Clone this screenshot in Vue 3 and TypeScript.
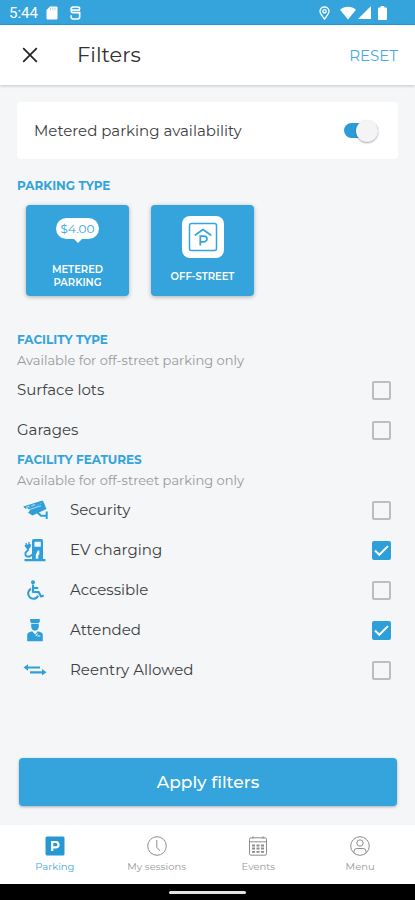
<script setup lang="ts">
import { reactive, ref } from 'vue'

type FeatureIcon = 'camera' | 'charger' | 'wheelchair' | 'attendant' | 'arrows'
type TabIcon = 'parking' | 'clock' | 'calendar' | 'person'

interface Option {
  id: string
  label: string
  checked: boolean
  icon?: FeatureIcon
}

const metered = ref(true)
const parkingTypes = reactive({ metered: true, offStreet: true })

const facilityTypes = reactive<Option[]>([
  { id: 'surface', label: 'Surface lots', checked: false },
  { id: 'garages', label: 'Garages', checked: false },
])

const features = reactive<Option[]>([
  { id: 'security', label: 'Security', checked: false, icon: 'camera' },
  { id: 'ev', label: 'EV charging', checked: true, icon: 'charger' },
  { id: 'accessible', label: 'Accessible', checked: false, icon: 'wheelchair' },
  { id: 'attended', label: 'Attended', checked: true, icon: 'attendant' },
  { id: 'reentry', label: 'Reentry Allowed', checked: false, icon: 'arrows' },
])

const tabs: { label: string; icon: TabIcon }[] = [
  { label: 'Parking', icon: 'parking' },
  { label: 'My sessions', icon: 'clock' },
  { label: 'Events', icon: 'calendar' },
  { label: 'Menu', icon: 'person' },
]
const activeTab = ref('Parking')

function reset(): void {
  metered.value = false
  parkingTypes.metered = false
  parkingTypes.offStreet = false
  for (const option of [...facilityTypes, ...features]) option.checked = false
}
</script>

<template>
  <div class="screen">
    <div class="status">
      <span class="time">5:44</span>
      <svg class="sd" width="12" height="14" viewBox="0 0 12 14" aria-hidden="true">
        <path d="M4 0.5h6.5a1 1 0 0 1 1 1v11a1 1 0 0 1-1 1h-9a1 1 0 0 1-1-1V4z" fill="#fff" />
        <path d="M4.5 2v2.2M6.8 2v2.2M9 2v2.2" stroke="#9bd2ef" stroke-width="0.9" />
      </svg>
      <svg class="sim" width="11" height="14" viewBox="0 0 11 14" fill="none" stroke="#fff" stroke-width="1.7" aria-hidden="true">
        <path d="M9.600 3.200V2.600A1.600 1.600 0 0 0 8 1H3a1.800 1.800 0 0 0-1.800 1.800v2A1.800 1.800 0 0 0 3 6.600h6.600v4.600A1.800 1.800 0 0 1 7.800 13H3a1.800 1.800 0 0 1-1.800-1.800V9.300M1 4.200h9" />
      </svg>
      <span class="grow"></span>
      <svg class="pin" width="11" height="14" viewBox="0 0 11 14" fill="none" stroke="#fff" stroke-width="1.3" aria-hidden="true">
        <path d="M5.500 13C3.500 10.300 1 7.800 1 5.300a4.500 4.300 0 0 1 9 0c0 2.500-2.500 5-4.500 7.700z" />
        <circle cx="5.500" cy="5.300" r="1.700" />
      </svg>
      <svg class="wifi" width="16" height="14" viewBox="0 0 16 14" fill="#fff" aria-hidden="true">
        <path d="M0 3.800C4.500-0.300 11.500-0.300 16 3.800L8 13.600z" />
      </svg>
      <svg class="signal" width="13" height="13" viewBox="0 0 13 13" fill="#fff" aria-hidden="true">
        <path d="M13 0v13H0z" />
      </svg>
      <svg class="battery" width="9" height="14" viewBox="0 0 9 14" fill="#fff" aria-hidden="true">
        <path d="M2.700 0h3.600v1.500H8a1 1 0 0 1 1 1V13a1 1 0 0 1-1 1H1a1 1 0 0 1-1-1V2.500a1 1 0 0 1 1-1h1.700z" />
      </svg>
    </div>

    <header class="bar">
      <button class="close" type="button" aria-label="Close">
        <svg width="16" height="16" viewBox="0 0 16 16" stroke="#222" stroke-width="1.700" aria-hidden="true">
          <path d="M1.200 1.200l13.600 13.600M14.800 1.200L1.200 14.800" />
        </svg>
      </button>
      <h1>Filters</h1>
      <button class="reset" type="button" @click="reset">RESET</button>
    </header>

    <main class="content">
      <label class="card" for="metered-switch">
        <span>Metered parking availability</span>
        <input id="metered-switch" v-model="metered" class="switch" type="checkbox" role="switch" />
      </label>

      <section class="types">
        <h2>PARKING TYPE</h2>
        <div class="tiles">
          <button
            class="tile"
            type="button"
            :aria-pressed="parkingTypes.metered"
            @click="parkingTypes.metered = !parkingTypes.metered"
          >
            <span class="picture"><span class="bubble">$4.00</span></span>
            <span class="tile-label">METERED PARKING</span>
          </button>
          <button
            class="tile"
            type="button"
            :aria-pressed="parkingTypes.offStreet"
            @click="parkingTypes.offStreet = !parkingTypes.offStreet"
          >
            <span class="picture">
              <svg width="42" height="42" viewBox="0 0 42 42" fill="none" stroke="#35a4dc" aria-hidden="true">
                <rect width="42" height="42" rx="8" fill="#fff" stroke="none" />
                <rect x="7.500" y="7.500" width="27" height="27" rx="2" stroke-width="1.500" />
                <path d="M13.300 19L21 13.500l7.700 5.500" stroke-width="1.700" stroke-linecap="round" stroke-linejoin="round" />
                <path d="M18.300 29.500v-9.300h3.800a2.800 2.800 0 0 1 0 5.600h-3.800" stroke-width="1.800" />
              </svg>
            </span>
            <span class="tile-label">OFF-STREET</span>
          </button>
        </div>
      </section>

      <section>
        <h2>FACILITY TYPE</h2>
        <p class="hint">Available for off-street parking only</p>
        <label v-for="option in facilityTypes" :key="option.id" class="row" :for="option.id">
          <span class="name">{{ option.label }}</span>
          <span class="check">
            <input :id="option.id" v-model="option.checked" type="checkbox" />
            <svg v-if="option.checked" width="19" height="19" viewBox="0 0 19 19" fill="none" stroke="#fff" stroke-width="2" aria-hidden="true">
              <path d="M3 9.500l4.300 4.300 8.700-8.700" />
            </svg>
          </span>
        </label>
      </section>

      <section>
        <h2>FACILITY FEATURES</h2>
        <p class="hint">Available for off-street parking only</p>
        <label v-for="option in features" :key="option.id" class="row" :for="option.id">
          <span class="icon">
            <svg v-if="option.icon === 'camera'" width="25" height="20" viewBox="0 0 25 20" fill="#2f9fda" aria-hidden="true">
              <path d="M0.300 6.500L19.500 0.600l1.500 2L2.200 8.800z" />
              <path d="M4.500 8L20.800 2.500l2.700 6.500L9.500 15.500 5 12.800l2-2.200z" />
              <path d="M14.500 12.500l3.500 3.300h5" fill="none" stroke="#2f9fda" stroke-width="2" />
              <rect x="22.700" y="11.500" width="2" height="7.500" />
              <path d="M3 7.300l3.500-1.100M8.500 5.600l3.500-1.100M6 9.700l12-4" stroke="#f4f6f8" stroke-width="0.700" />
            </svg>
            <svg v-else-if="option.icon === 'charger'" width="24" height="24" viewBox="0 0 24 24" fill="#2f9fda" aria-hidden="true">
              <path fill-rule="evenodd" d="M10.700 1h7.600a1.700 1.700 0 0 1 1.700 1.700V21h2.500v2.200h-21V21H9V2.700A1.700 1.700 0 0 1 10.700 1zM11.500 3.800v5h6.300v-5zM14.800 12.500l-2 4.200v4h2.500v-3.500l1-1v-3.700z" />
              <path d="M9.500 16.500l-3 2H4.300a1.800 1.800 0 0 1-1.800-1.800v-2L5 12.200V9" fill="none" stroke="#2f9fda" stroke-width="1.900" />
              <path d="M1.500 7.500l1-0.700V5h1.300v1.500h1.500V4h1.300v2h1.200v3L6 10.800H3.500z" />
            </svg>
            <svg v-else-if="option.icon === 'wheelchair'" width="20" height="22" viewBox="0 0 20 22" fill="none" stroke="#2f9fda" stroke-width="2.100" aria-hidden="true">
              <circle cx="8" cy="3.200" r="2" fill="#2f9fda" stroke="none" />
              <path d="M8 5.500V13h5.700l2.300 4.500 2.700-1M8 9h5.200" stroke-linejoin="round" />
              <path d="M6 9.700a5.300 5.300 0 1 0 7.200 7" />
            </svg>
            <svg v-else-if="option.icon === 'attendant'" width="18" height="24" viewBox="0 0 18 24" fill="#2f9fda" aria-hidden="true">
              <path d="M4.200 1h9.600v2.200l-1 1.700H5.200l-1-1.700z" />
              <path d="M5.200 5.800h7.600v2.500c0 2.500-1.600 4.400-3.800 4.400S5.200 10.800 5.200 8.300z" />
              <path d="M1.200 23.300v-6.500q0-2 2-2.600l3-1L9 16.500l2.800-3.300 3 1q2 0.600 2 2.600v6.500z" />
              <path d="M9.800 18l1.700-2.500M11.500 18h2.800" stroke="#f4f6f8" stroke-width="1.100" />
            </svg>
            <svg v-else width="24" height="14" viewBox="0 0 24 14" fill="#2f9fda" aria-hidden="true">
              <path d="M0.500 4.500L5 1.300V3.500h12v2.100H5v2.200z" />
              <path d="M23.500 9.300L19 6.100v2.200H7v2.100h12v2.200z" />
            </svg>
          </span>
          <span class="name">{{ option.label }}</span>
          <span class="check">
            <input :id="option.id" v-model="option.checked" type="checkbox" />
            <svg v-if="option.checked" width="19" height="19" viewBox="0 0 19 19" fill="none" stroke="#fff" stroke-width="2" aria-hidden="true">
              <path d="M3 9.500l4.300 4.300 8.700-8.700" />
            </svg>
          </span>
        </label>
      </section>
    </main>

    <div class="action">
      <button class="apply" type="button">Apply filters</button>
    </div>

    <nav class="tabs">
      <button
        v-for="tab in tabs"
        :key="tab.label"
        type="button"
        class="tab"
        :class="{ active: tab.label === activeTab }"
        @click="activeTab = tab.label"
      >
        <svg width="20" height="20" viewBox="0 0 20 20" fill="none" stroke="#8c8c8c" aria-hidden="true">
          <template v-if="tab.icon === 'parking'">
            <rect x="0.500" y="0.500" width="19" height="19" rx="1.500" fill="#2798d4" stroke="none" />
            <path d="M7.200 15V6h3.600a2.700 2.700 0 0 1 0 5.400H7.200" stroke="#fff" stroke-width="2.200" />
          </template>
          <template v-else-if="tab.icon === 'clock'">
            <circle cx="10" cy="10" r="9.300" />
            <path d="M9.800 4v7.500l3.200 3.200" />
          </template>
          <template v-else-if="tab.icon === 'calendar'">
            <rect x="1.500" y="1.800" width="17" height="17.400" rx="1.500" />
            <path d="M1.500 5.800h17M5 0.300v2.500M15 0.300v2.500" />
            <path d="M4 9.500h3M8.500 9.500h3M13 9.500h3M4 12.500h3M8.500 12.500h3M13 12.500h3M4 15.800h3M8.500 15.800h3M13 15.800h3" stroke-width="1.800" />
          </template>
          <template v-else>
            <circle cx="10" cy="10" r="9.300" />
            <circle cx="10" cy="7" r="3.200" />
            <path d="M4 17v-1.500a3 3 0 0 1 3-3h6a3 3 0 0 1 3 3V17" />
          </template>
        </svg>
        <span>{{ tab.label }}</span>
      </button>
    </nav>

    <div class="system"><span class="handle"></span></div>
  </div>
</template>

<style>
body {
  background: #f4f6f8;
}
</style>

<style scoped>
.screen {
  display: flex;
  flex-direction: column;
  min-height: 100vh;
  background: #f4f6f8;
  color: #404040;
  font-family: Montserrat, Inter, "Open Sans", sans-serif;
  font-size: 15px;
  line-height: 20px;
}

button {
  margin: 0;
  padding: 0;
  border: 0;
  background: none;
  color: inherit;
  font-family: inherit;
  cursor: pointer;
}

.status {
  display: flex;
  align-items: center;
  height: 25px;
  padding: 1px 28px 0 9px;
  box-sizing: border-box;
  background: #35a4dc;
  border-bottom: 1px solid #2498d2;
  color: #fff;
}

.time {
  font-family: Roboto, sans-serif;
  font-size: 15px;
}

.sd {
  margin-left: 8px;
}

.sim {
  margin-left: 12px;
}

.grow {
  flex: 1;
}

.wifi {
  margin-left: 10px;
}

.signal {
  margin-left: 2px;
}

.battery {
  margin-left: 7px;
}

.bar {
  display: flex;
  align-items: center;
  height: 60px;
  padding: 0 17px 0 22px;
  background: #fff;
  box-shadow: 0 1px 3px rgba(0, 0, 0, 0.2);
}

.close {
  display: flex;
}

h1 {
  flex: 1;
  margin: 0 0 0 39px;
  color: #303030;
  font-size: 21px;
  font-weight: 400;
  line-height: 28px;
}

.reset {
  color: #4aaade;
  font-size: 15px;
}

.content {
  flex: 1;
  padding: 17px 17px 0;
}

.card {
  display: flex;
  align-items: center;
  justify-content: space-between;
  height: 57px;
  padding: 0 20px 0 17px;
  border-radius: 4px;
  background: #fff;
}

.switch {
  appearance: none;
  display: flex;
  align-items: center;
  width: 34px;
  height: 15px;
  margin: 0;
  border-radius: 8px;
  background: #b8b8b8;
}

.switch::before {
  content: "";
  width: 22px;
  height: 22px;
  flex: none;
  border-radius: 50%;
  background: #f4f4f6;
  box-shadow: 0 1px 2px rgba(0, 0, 0, 0.35);
}

.switch:checked {
  justify-content: flex-end;
  background: #2b9cd8;
}

.types {
  margin: 17px 0 34px;
}

h2 {
  margin: 0;
  color: #35a4dc;
  font-size: 12px;
  font-weight: 700;
  line-height: 20px;
}

.tiles {
  display: flex;
  gap: 22px;
  padding: 9px 9px 0;
}

.tile {
  display: flex;
  flex-direction: column;
  align-items: center;
  width: 103px;
  height: 91px;
  padding: 11px 16px 2px;
  border-radius: 4px;
  background: #35a4dc;
  box-shadow: 0 1px 4px rgba(0, 0, 0, 0.3);
  color: #fff;
}

.picture {
  display: flex;
  align-items: flex-start;
  height: 42px;
}

.tile-label {
  margin: auto 0;
  font-size: 10px;
  font-weight: 600;
  line-height: 13px;
}

.bubble {
  position: relative;
  width: 43px;
  margin-top: 2px;
  border-radius: 11px;
  background: #fff;
  color: #35a4dc;
  font-size: 12px;
  line-height: 21px;
}

.bubble::after {
  content: "";
  position: absolute;
  top: 20px;
  left: 50%;
  border: 5px solid transparent;
  border-top-color: #fff;
  border-bottom: 0;
  transform: translateX(-50%);
}

.hint {
  margin: 0;
  color: #999;
  font-size: 13px;
  line-height: 20px;
}

.row {
  display: flex;
  align-items: center;
  height: 40px;
  padding-right: 7px;
}

.icon {
  display: flex;
  align-items: center;
  justify-content: center;
  width: 36px;
  margin-right: 17px;
}

.name {
  flex: 1;
}

.check {
  display: grid;
}

.check input,
.check svg {
  grid-area: 1 / 1;
}

.check svg {
  pointer-events: none;
}

.check input {
  appearance: none;
  width: 19px;
  height: 19px;
  margin: 0;
  border: 2px solid #bdbdbd;
  border-radius: 2px;
}

.check input:checked {
  border-color: #2f9fda;
  background: #2f9fda;
}

.action {
  padding: 24px 18px 19px 19px;
}

.apply {
  width: 100%;
  height: 48px;
  border-radius: 4px;
  background: #35a4dc;
  box-shadow: 0 1px 3px rgba(0, 0, 0, 0.3);
  color: #fff;
  font-size: 17px;
  font-weight: 500;
}

.tabs {
  display: flex;
  height: 59px;
  padding: 0 4px;
  background: #fff;
}

.tab {
  display: flex;
  flex: 1;
  flex-direction: column;
  align-items: center;
  padding-top: 11px;
  color: #999;
  font-size: 10px;
  line-height: 14px;
  gap: 4px;
}

.tab.active {
  color: #4aaade;
}

.system {
  display: flex;
  align-items: center;
  justify-content: center;
  height: 16px;
  background: #000;
}

.handle {
  width: 77px;
  height: 3px;
  border-radius: 2px;
  background: #e4e4e4;
}
</style>
